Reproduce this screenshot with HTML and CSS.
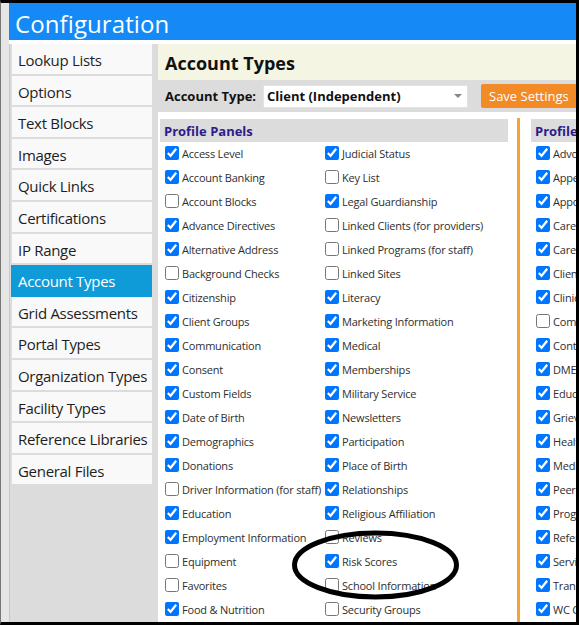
FILE: index.html
```html
<!DOCTYPE html>
<html lang="en">
<head>
<meta charset="utf-8">
<title>Configuration</title>
<link rel="stylesheet" href="styles.css">
</head>
<body>
<div class="screen">
  <div class="app">
    <header class="titlebar">Configuration</header>
    <div class="body">
      <nav class="sidebar">
        <div class="nav-item">Lookup Lists</div>
        <div class="nav-item">Options</div>
        <div class="nav-item">Text Blocks</div>
        <div class="nav-item">Images</div>
        <div class="nav-item">Quick Links</div>
        <div class="nav-item">Certifications</div>
        <div class="nav-item">IP Range</div>
        <div class="nav-item selected">Account Types</div>
        <div class="nav-item">Grid Assessments</div>
        <div class="nav-item">Portal Types</div>
        <div class="nav-item">Organization Types</div>
        <div class="nav-item">Facility Types</div>
        <div class="nav-item">Reference Libraries</div>
        <div class="nav-item">General Files</div>
      </nav>
      <main class="main">
        <div class="page-title">Account Types</div>
        <div class="toolbar">
          <span class="tb-label">Account Type:</span>
          <div class="select"><span>Client (Independent)</span><span class="arrow"></span></div>
          <button class="save">Save Settings</button>
        </div>
        <div class="panels">
          <section class="panel first">
            <div class="panel-head">Profile Panels</div>
            <div class="grid two">
              <div class="col">
                <label class="cb"><input type="checkbox" checked><span>Access Level</span></label>
                <label class="cb"><input type="checkbox" checked><span>Account Banking</span></label>
                <label class="cb"><input type="checkbox"><span>Account Blocks</span></label>
                <label class="cb"><input type="checkbox" checked><span>Advance Directives</span></label>
                <label class="cb"><input type="checkbox" checked><span>Alternative Address</span></label>
                <label class="cb"><input type="checkbox"><span>Background Checks</span></label>
                <label class="cb"><input type="checkbox" checked><span>Citizenship</span></label>
                <label class="cb"><input type="checkbox" checked><span>Client Groups</span></label>
                <label class="cb"><input type="checkbox" checked><span>Communication</span></label>
                <label class="cb"><input type="checkbox" checked><span>Consent</span></label>
                <label class="cb"><input type="checkbox" checked><span>Custom Fields</span></label>
                <label class="cb"><input type="checkbox" checked><span>Date of Birth</span></label>
                <label class="cb"><input type="checkbox" checked><span>Demographics</span></label>
                <label class="cb"><input type="checkbox" checked><span>Donations</span></label>
                <label class="cb"><input type="checkbox"><span>Driver Information (for staff)</span></label>
                <label class="cb"><input type="checkbox" checked><span>Education</span></label>
                <label class="cb"><input type="checkbox" checked><span>Employment Information</span></label>
                <label class="cb"><input type="checkbox"><span>Equipment</span></label>
                <label class="cb"><input type="checkbox"><span>Favorites</span></label>
                <label class="cb"><input type="checkbox" checked><span>Food &amp; Nutrition</span></label>
              </div>
              <div class="col">
                <label class="cb"><input type="checkbox" checked><span>Judicial Status</span></label>
                <label class="cb"><input type="checkbox"><span>Key List</span></label>
                <label class="cb"><input type="checkbox" checked><span>Legal Guardianship</span></label>
                <label class="cb"><input type="checkbox"><span>Linked Clients (for providers)</span></label>
                <label class="cb"><input type="checkbox"><span>Linked Programs (for staff)</span></label>
                <label class="cb"><input type="checkbox"><span>Linked Sites</span></label>
                <label class="cb"><input type="checkbox" checked><span>Literacy</span></label>
                <label class="cb"><input type="checkbox" checked><span>Marketing Information</span></label>
                <label class="cb"><input type="checkbox" checked><span>Medical</span></label>
                <label class="cb"><input type="checkbox" checked><span>Memberships</span></label>
                <label class="cb"><input type="checkbox" checked><span>Military Service</span></label>
                <label class="cb"><input type="checkbox" checked><span>Newsletters</span></label>
                <label class="cb"><input type="checkbox" checked><span>Participation</span></label>
                <label class="cb"><input type="checkbox" checked><span>Place of Birth</span></label>
                <label class="cb"><input type="checkbox" checked><span>Relationships</span></label>
                <label class="cb"><input type="checkbox" checked><span>Religious Affiliation</span></label>
                <label class="cb"><input type="checkbox"><span>Reviews</span></label>
                <label class="cb"><input type="checkbox" checked><span>Risk Scores</span></label>
                <label class="cb"><input type="checkbox"><span>School Information</span></label>
                <label class="cb"><input type="checkbox"><span>Security Groups</span></label>
              </div>
            </div>
          </section>
          <section class="panel second">
            <div class="panel-head">Profile Tabs</div>
            <div class="col">
              <label class="cb"><input type="checkbox" checked><span>Advocacy</span></label>
              <label class="cb"><input type="checkbox" checked><span>Appeals</span></label>
              <label class="cb"><input type="checkbox" checked><span>Appointments</span></label>
              <label class="cb"><input type="checkbox" checked><span>Care Plans</span></label>
              <label class="cb"><input type="checkbox" checked><span>Care Team</span></label>
              <label class="cb"><input type="checkbox" checked><span>Client Notes</span></label>
              <label class="cb"><input type="checkbox" checked><span>Clinical</span></label>
              <label class="cb"><input type="checkbox"><span>Communications</span></label>
              <label class="cb"><input type="checkbox" checked><span>Contacts</span></label>
              <label class="cb"><input type="checkbox" checked><span>DME</span></label>
              <label class="cb"><input type="checkbox" checked><span>Education</span></label>
              <label class="cb"><input type="checkbox" checked><span>Grievances</span></label>
              <label class="cb"><input type="checkbox" checked><span>Health</span></label>
              <label class="cb"><input type="checkbox" checked><span>Medications</span></label>
              <label class="cb"><input type="checkbox" checked><span>Peers</span></label>
              <label class="cb"><input type="checkbox" checked><span>Programs</span></label>
              <label class="cb"><input type="checkbox" checked><span>Referrals</span></label>
              <label class="cb"><input type="checkbox" checked><span>Services</span></label>
              <label class="cb"><input type="checkbox" checked><span>Transportation</span></label>
              <label class="cb"><input type="checkbox" checked><span>WC Claims</span></label>
            </div>
          </section>
        </div>
      </main>
    </div>
  </div>
  <svg class="annotation" width="579" height="625" viewBox="0 0 579 625" aria-hidden="true">
    <ellipse cx="375.5" cy="565" rx="81" ry="32" fill="none" stroke="#000" stroke-width="5"/>
  </svg>
</div>
</body>
</html>
```
FILE: styles.css
```css
html, body {
  margin: 0;
  padding: 0;
}
body {
  font-family: "Open Sans", "Noto Sans", sans-serif;
  color: #222;
}
.screen {
  position: relative;
  width: 579px;
  height: 625px;
  box-sizing: border-box;
  border-top: 3px solid #000;
  border-right: 3px solid #000;
  border-bottom: 3px solid #000;
  border-left: 1px solid #777;
  background: #e6e6e6;
  padding-left: 8px;
  overflow: hidden;
}
.app {
  height: 100%;
  display: flex;
  flex-direction: column;
  background: #fff;
}
.titlebar {
  height: 37px;
  flex: none;
  box-sizing: border-box;
  background: #1589f6;
  color: #fff;
  font-size: 24px;
  letter-spacing: 0.1px;
  line-height: 37px;
  padding: 2px 0 0 6px;
}
.body {
  flex: 1;
  min-height: 0;
  display: flex;
  padding-top: 4px;
}
.sidebar {
  width: 149px;
  flex: none;
  box-sizing: border-box;
  background: #dcdcdc;
  border-left: 1px solid #c8c8c8;
  padding: 0 6px 0 2px;
}
.nav-item {
  height: 29.6px;
  box-sizing: border-box;
  margin-bottom: 2px;
  background: #f9f9f9;
  font-size: 15px;
  letter-spacing: -0.3px;
  line-height: 29.6px;
  padding: 2px 0 0 6px;
  color: #1e1e1e;
  white-space: nowrap;
  overflow: hidden;
}
.nav-item.selected {
  height: 31.6px;
  margin-bottom: 0;
  margin-left: -1px;
  padding-left: 7px;
  background: #0e9bd8;
  color: #fff;
}
.main {
  flex: 1;
  min-width: 0;
  display: flex;
  flex-direction: column;
  overflow: hidden;
}
.page-title {
  height: 36px;
  flex: none;
  background: #f4f5e2;
  font-weight: 700;
  font-size: 18px;
  line-height: 38px;
  padding-left: 7px;
  color: #111;
}
.toolbar {
  height: 32px;
  flex: none;
  background: #dcdcdc;
  display: flex;
  align-items: center;
  padding-left: 7px;
  white-space: nowrap;
}
.tb-label {
  flex: none;
  font-weight: 700;
  font-size: 13px;
  color: #111;
  width: 98px;
}
.select {
  flex: none;
  width: 205px;
  height: 23px;
  box-sizing: border-box;
  background: #fff;
  border: 1px solid #e2e2e2;
  display: flex;
  align-items: center;
  justify-content: space-between;
  padding: 0 5px 0 3px;
  font-weight: 700;
  font-size: 13px;
  color: #111;
}
.arrow {
  width: 0;
  height: 0;
  border-left: 4px solid transparent;
  border-right: 4px solid transparent;
  border-top: 4px solid #888;
}
.save {
  margin-left: 13px;
  height: 24px;
  width: 110px;
  flex: none;
  border: none;
  border-radius: 2px;
  background: #f28a26;
  color: #fff;
  font-family: inherit;
  font-size: 13px;
  text-align: left;
  padding: 0 0 0 8px;
}
.panels {
  flex: 1;
  min-height: 0;
  display: flex;
  padding: 6px 0 0 2px;
  white-space: nowrap;
}
.panel.first {
  width: 348px;
  flex: none;
  padding-top: 1px;
}
.panel.second {
  flex: none;
  width: 120px;
  margin-left: 9px;
  border-left: 3px solid #f6a234;
  padding-left: 11px;
  padding-top: 1px;
}
.panel-head {
  height: 23px;
  background: #dcdcdc;
  color: #2c1b8a;
  font-weight: 700;
  font-size: 13px;
  line-height: 25px;
  padding-left: 4px;
}
.grid.two {
  display: grid;
  grid-template-columns: 160px 188px;
}
.col {
  display: flex;
  flex-direction: column;
  padding-left: 5px;
  margin-top: -1px;
}
.cb {
  height: 24px;
  display: flex;
  align-items: center;
  font-size: 11px;
  letter-spacing: -0.2px;
  color: #2e2e2e;
}
.cb input {
  width: 14px;
  height: 14px;
  margin: 0 3px 0 0;
  flex: none;
}
.annotation {
  position: absolute;
  left: -1px;
  top: -3px;
  pointer-events: none;
}
```
